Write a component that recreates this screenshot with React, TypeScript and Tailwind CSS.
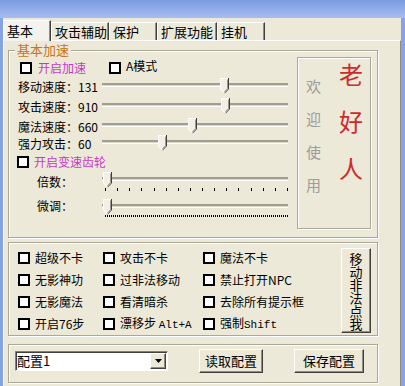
import React from "react";

const raised =
  "border border-t-white border-l-white border-r-[#404040] border-b-[#404040] shadow-[inset_-1px_-1px_0_#8e8c80]";

const Box = () => (
  <span className="block w-3 h-3 border-2 border-black bg-white shrink-0" />
);

const Thumb = () => (
  <svg width="9" height="16" viewBox="0 0 9 16" className="block">
    <path d="M0 0H9V11L4.5 15.5L0 11Z" fill="#f1efe6" />
    <path d="M0.5 11V0.5H8" stroke="#fff" fill="none" />
    <path d="M8.5 0V11L4.5 15.2" stroke="#404040" fill="none" />
    <path d="M7.5 1.5V10.6L4.5 13.8" stroke="#9a988c" fill="none" />
    <path d="M0.5 11L4.2 14.8" stroke="#fff" fill="none" />
  </svg>
);

const Slider = ({ left, width = 186 }: { left: number; width?: number }) => (
  <div className="relative h-[16px] pt-[5px]" style={{ width }}>
    <div className="h-[4px] border-t-2 border-t-[#a19e90] border-b border-b-white bg-[#dcd9cb]" />
    <div className="absolute top-0" style={{ left }}>
      <Thumb />
    </div>
  </div>
);

const Ticks = ({ count, step, h }: { count: number; step: number; h: number }) => (
  <svg width="186" height={h} className="block">
    {Array.from({ length: count }).map((_, i) => (
      <rect key={i} x={3 + Math.round(i * step)} y={0} width={1} height={h} fill="#000" />
    ))}
  </svg>
);

const Group = ({
  title,
  className,
  children,
}: {
  title?: string;
  className: string;
  children: React.ReactNode;
}) => (
  <div
    className={`relative ml-[4px] w-[370px] border border-[#aca899] shadow-[inset_1px_1px_0_#fff,1px_1px_0_#fff] ${className}`}
  >
    {title && (
      <span className="absolute -top-[9px] left-[6px] bg-[#ece9d8] px-[2px] text-[13px] leading-[16px] text-[#c9731b]">
        {title}
      </span>
    )}
    {children}
  </div>
);

const SpeedRow = ({ label, left, h }: { label: string; left: number; h: string }) => (
  <div className={`flex items-center ${h}`}>
    <span className="w-[84px] leading-[14px]">{label}</span>
    <div className="mb-[3px]">
      <Slider left={left} />
    </div>
  </div>
);

const checks = [
  ["超级不卡", "攻击不卡", "魔法不卡"],
  ["无影神功", "过非法移动", "禁止打开NPC"],
  ["无影魔法", "看清暗杀", "去除所有提示框"],
  ["开启76步", "漂移步 Alt+A", "强制Shift"],
];

export default function App() {
  const tabs = ["攻击辅助", "保护", "扩展功能", "挂机"];
  const tabW = ["w-[58px]", "w-[48px]", "w-[60px]", "w-[48px]"];
  return (
    <div className="flex flex-col w-[405px] h-[386px] overflow-hidden text-[12px] text-black font-['Noto_Sans_CJK_SC',sans-serif]">
      <div className="h-[18px] bg-gradient-to-b from-[#7b9be2] to-[#a6bdf0]" />
      <div className="flex flex-1">
        <div className="w-[3px] bg-[#86a3e6]" />
        <div className="flex-1 flex flex-col bg-[#ece9d8]">
          {/* tabs */}
          <div className="flex items-end h-[22px] text-[13px]">
            <div className="relative z-10 -mb-[1px] w-[48px] h-[21px] flex items-center pl-[3px] bg-[#f3f2ec] border-t border-l border-white border-r border-r-[#404040] shadow-[inset_-1px_0_0_#8e8c80]">
              基本
            </div>
            {tabs.map((t, i) => (
              <div
                key={t}
                className={`${tabW[i]} h-[18px] flex items-center pl-[3px] border-t border-l border-white border-r border-r-[#404040] shadow-[inset_-1px_0_0_#8e8c80]`}
              >
                {t}
              </div>
            ))}
          </div>
          {/* panel */}
          <div className="flex-1 border-t border-l border-white border-r border-r-[#8e8c80]">
            <Group title="基本加速" className="mt-[9px] h-[188px]">
              <div className="flex pt-[6px] pl-[9px]">
                <div className="w-[279px] pt-[1px]">
                  <div className="flex items-center h-[20px]">
                    <span className="ml-[2px]">
                      <Box />
                    </span>
                    <span className="ml-[6px] text-[#c838c8]">开启加速</span>
                    <span className="ml-[23px]">
                      <Box />
                    </span>
                    <span className="ml-[5px] -mt-[4px]">A模式</span>
                  </div>
                  <SpeedRow label="移动速度：131" left={118} h="h-[18px]" />
                  <SpeedRow label="攻击速度：910" left={119} h="h-[22px]" />
                  <SpeedRow label="魔法速度：660" left={86} h="h-[18px]" />
                  <SpeedRow label="强力攻击：60" left={56} h="h-[16px]" />
                  <div className="flex items-center h-[20px]">
                    <span className="-ml-[1px]">
                      <Box />
                    </span>
                    <span className="ml-[5px] text-[#c838c8]">开启变速齿轮</span>
                  </div>
                  <div className="flex h-[20px]">
                    <span className="w-[84px] pl-[19px] self-center">倍数：</span>
                    <div>
                      <Slider left={1} />
                      <Ticks count={16} step={12.13} h={3} />
                    </div>
                  </div>
                  <div className="flex h-[28px]">
                    <span className="w-[84px] pl-[19px] self-center">微调：</span>
                    <div className="mt-[7px]">
                      <Slider left={1} />
                      <Ticks count={92} step={2} h={2} />
                    </div>
                  </div>
                </div>
                <div className="w-[74px] h-[172px] border border-[#aca899] shadow-[inset_1px_1px_0_#fff,1px_1px_0_#fff] flex">
                  <div className="ml-[8px] pt-[20px] flex flex-col gap-[17px] text-[15px] leading-[16px] text-[#9c9c9c]">
                    <span>欢</span>
                    <span>迎</span>
                    <span>使</span>
                    <span>用</span>
                  </div>
                  <div className="ml-[18px] pt-[4px] flex flex-col gap-[23px] text-[24px] leading-[24px] text-[#d02a2a]">
                    <span>老</span>
                    <span>好</span>
                    <span>人</span>
                  </div>
                </div>
              </div>
            </Group>

            <Group className="mt-[4px] h-[94px]">
              <div className="flex">
                <div className="pt-[4px] pl-[9px]">
                  {checks.map((row, r) => (
                    <div key={r} className="flex h-[22px] items-center">
                      {row.map((c, i) => (
                        <div
                          key={c}
                          className={`flex items-center gap-[5px] ${i === 0 ? "w-[85px]" : i === 1 ? "w-[100px]" : ""}`}
                        >
                          <Box />
                          <span className="whitespace-pre">
                            {c === "漂移步 Alt+A" ? (
                              <>
                                漂移步{" "}
                                <span className="font-['Liberation_Mono',monospace] text-[11px]">Alt+A</span>
                              </>
                            ) : c === "强制Shift" ? (
                              <>
                                强制
                                <span className="font-['Liberation_Mono',monospace] text-[11px]">Shift</span>
                              </>
                            ) : (
                              c
                            )}
                          </span>
                        </div>
                      ))}
                    </div>
                  ))}
                </div>
                <button
                  className={`ml-auto mr-[6px] mt-[5px] w-[30px] h-[85px] flex items-center justify-center bg-[#ece9d8] ${raised}`}
                >
                  <span className="w-[13px] text-[13px] leading-[13px] break-all">移动非法点我</span>
                </button>
              </div>
            </Group>

            <Group className="mt-[8px] h-[39px]">
              <div className="flex items-start pt-[4px] pl-[6px]">
                <div className="mt-[2px] w-[153px] h-[20px] flex items-center bg-white border border-t-[#808080] border-l-[#808080] border-r-white border-b-white shadow-[inset_1px_1px_0_#404040]">
                  <span className="flex-1 pl-[1px] text-[13px] leading-[16px]">配置1</span>
                  <span
                    className={`mr-[1px] w-[16px] h-[16px] flex items-center justify-center bg-[#ece9d8] ${raised}`}
                  >
                    <svg width="7" height="4" viewBox="0 0 7 4">
                      <path d="M0 0H7L3.5 4Z" fill="#000" />
                    </svg>
                  </span>
                </div>
                <button className={`ml-[31px] w-[64px] h-[24px] text-[13px] bg-[#ece9d8] ${raised}`}>
                  读取配置
                </button>
                <button className={`ml-[31px] w-[70px] h-[24px] text-[13px] bg-[#ece9d8] ${raised}`}>
                  保存配置
                </button>
              </div>
            </Group>
          </div>
        </div>
        <div className="w-[4px] bg-[#86a3e6]" />
      </div>
    </div>
  );
}
